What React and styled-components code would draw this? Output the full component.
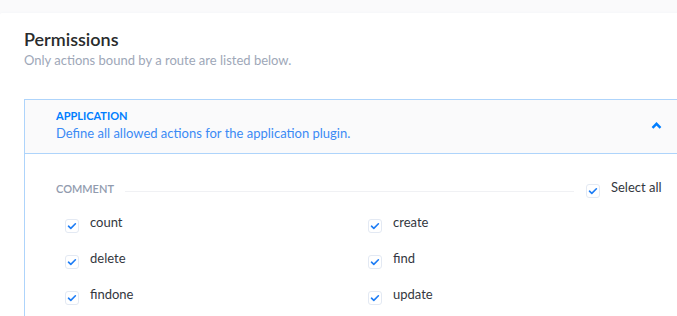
import styled, { createGlobalStyle } from 'styled-components';

const GlobalStyle = createGlobalStyle`
  html, body {
    margin: 0;
    padding: 0;
    background: #fafafb;
    overflow: hidden;
  }
  body {
    font-family: Lato, 'Open Sans', sans-serif;
    -webkit-font-smoothing: antialiased;
  }
`;

const Page = styled.div`
  padding-top: 13px;
  width: 677px;
  height: 316px;
  overflow: hidden;
`;

const Card = styled.section`
  background: #fff;
  border-radius: 2px;
  box-shadow: 0 2px 4px #e3e9f3;
  padding: 15px 0 30px 24px;
  width: 720px;
`;

const Title = styled.h2`
  margin: 0;
  font-size: 18px;
  line-height: 22px;
  font-weight: 600;
  color: #292b2c;
`;

const Subtitle = styled.p`
  margin: 1px 0 0;
  font-size: 13px;
  line-height: 18px;
  color: #9ea7b8;
`;

const Accordion = styled.div`
  margin-top: 30px;
  width: 690px;
  border: 1px solid #aed4fb;
  border-bottom: none;
`;

const Header = styled.div`
  display: flex;
  align-items: center;
  justify-content: space-between;
  background: #fafafb;
  border-bottom: 1px solid #aed4fb;
  padding: 8px 53px 11px 31px;
`;

const PluginName = styled.div`
  font-size: 11px;
  line-height: 16px;
  font-weight: 700;
  text-transform: uppercase;
  color: #007eff;
`;

const PluginDesc = styled.div`
  font-size: 13px;
  line-height: 18px;
  color: #3b8af5;
`;

const Body = styled.div`
  padding: 25px 0 20px 31px;
`;

const ControllerRow = styled.div`
  display: flex;
  align-items: flex-start;
  height: 20px;
`;

const ControllerName = styled.span`
  margin-top: 2px;
  font-size: 11px;
  line-height: 16px;
  font-weight: 600;
  text-transform: uppercase;
  color: #919bae;
`;

const Rule = styled.div`
  flex: 0 0 449px;
  height: 1px;
  margin: 12px 12px 0 11px;
  background: #f0f1f4;
`;

const Grid = styled.div`
  display: grid;
  grid-template-columns: 303px 303px;
  row-gap: 16px;
  margin-top: 14px;
  padding-left: 9px;
`;

const CheckLabel = styled.label`
  display: flex;
  align-items: flex-start;
  gap: 11px;
  font-size: 13px;
  line-height: 18px;
  color: #333740;
  margin-top: ${p => p.$lift ? -1 : 0}px;
`;

const Box = styled.span`
  flex: 0 0 auto;
  width: 12px;
  height: 12px;
  margin-top: ${p => p.$offset ?? 6}px;
  border: 1px solid #e3e9f3;
  border-radius: 3px;
  background: #fff;
  display: flex;
  align-items: center;
  justify-content: center;
`;

function Checkbox({ label, offset, lift }) {
  return (
    <CheckLabel $lift={lift}>
      <Box $offset={offset}>
        <svg width="10" height="10" viewBox="0 0 10 10">
          <polyline points="1.5,5.2 3.8,7.4 8.4,2.8" fill="none" stroke="#1c7cf5" strokeWidth="1.6" strokeLinecap="round" strokeLinejoin="round" />
        </svg>
      </Box>
      {label}
    </CheckLabel>
  );
}

const actions = ['count', 'create', 'delete', 'find', 'findone', 'update'];

export default function App() {
  return (
    <>
      <GlobalStyle />
      <Page>
        <Card>
          <Title>Permissions</Title>
          <Subtitle>Only actions bound by a route are listed below.</Subtitle>
          <Accordion>
            <Header>
              <div>
                <PluginName>Application</PluginName>
                <PluginDesc>Define all allowed actions for the application plugin.</PluginDesc>
              </div>
              <svg width="11" height="7" viewBox="0 0 11 7">
                <polyline points="1.5,5.8 5.5,1.8 9.5,5.8" fill="none" stroke="#007eff" strokeWidth="2.4" />
              </svg>
            </Header>
            <Body>
              <ControllerRow>
                <ControllerName>Comment</ControllerName>
                <Rule />
                <Checkbox label="Select all" offset={6} lift />
              </ControllerRow>
              <Grid>
                {actions.map(a => (
                  <Checkbox key={a} label={a} />
                ))}
              </Grid>
            </Body>
          </Accordion>
        </Card>
      </Page>
    </>
  );
}
